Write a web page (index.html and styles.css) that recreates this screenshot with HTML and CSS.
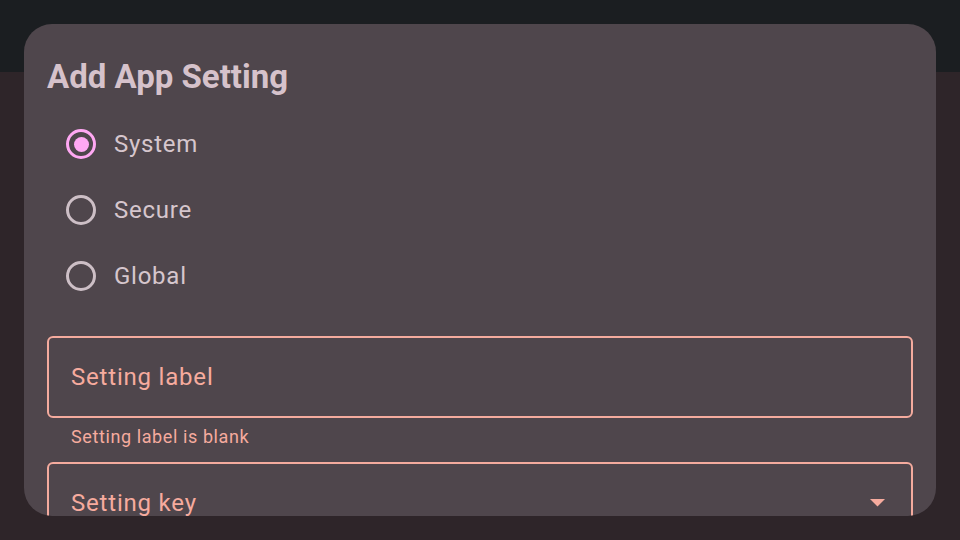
FILE: index.html
```html
<!DOCTYPE html>
<html>
<head>
<meta charset="utf-8">
<link rel="stylesheet" href="styles.css">
</head>
<body>
<div class="app">
  <header class="topbar"></header>
  <main class="content"></main>
</div>
<div class="dialog">
  <h1 class="title">Add App Setting</h1>
  <div class="radios">
    <label class="radio-row">
      <span class="radio checked"><span class="dot"></span></span>
      <span class="radio-text">System</span>
    </label>
    <label class="radio-row">
      <span class="radio"></span>
      <span class="radio-text">Secure</span>
    </label>
    <label class="radio-row">
      <span class="radio"></span>
      <span class="radio-text">Global</span>
    </label>
  </div>
  <div class="field">
    <span class="field-label">Setting label</span>
  </div>
  <div class="support">Setting label is blank</div>
  <div class="field dropdown">
    <span class="field-label">Setting key</span>
    <svg class="caret" width="15" height="8" viewBox="0 0 15 8"><path d="M0 0 L15 0 L7.5 7.5 Z" fill="#f6ab9e"/></svg>
  </div>
</div>
</body>
</html>
```

FILE: styles.css
```css
html, body {
  margin: 0;
  padding: 0;
  width: 960px;
  height: 540px;
  overflow: hidden;
  font-family: Roboto, "Liberation Sans", sans-serif;
}
.app {
  display: flex;
  flex-direction: column;
  height: 540px;
}
.topbar {
  height: 72px;
  background: #1b1e21;
  flex: none;
}
.content {
  flex: 1;
  background: #2e2529;
}
.dialog {
  position: absolute;
  left: 24px;
  top: 24px;
  width: 912px;
  height: 492px;
  box-sizing: border-box;
  padding: 0 23px;
  background: #4f464c;
  border-radius: 28px;
  overflow: hidden;
}
.title {
  margin: 0;
  padding-top: 32px;
  font-size: 33px;
  line-height: 42px;
  font-weight: 700;
  color: #d6c2cb;
  height: 42px;
  letter-spacing: 0;
}
.radios {
  display: flex;
  flex-direction: column;
  margin-top: 13px;
  padding-left: 19px;
}
.radio-row {
  display: flex;
  align-items: center;
  height: 66px;
  gap: 18px;
}
.radio {
  width: 30px;
  height: 30px;
  box-sizing: border-box;
  border: 3px solid #cdbfc6;
  border-radius: 50%;
  display: flex;
  align-items: center;
  justify-content: center;
}
.radio.checked {
  border-color: #ffa8f3;
}
.dot {
  width: 15px;
  height: 15px;
  border-radius: 50%;
  background: #ffa8f3;
}
.radio-text {
  font-size: 24px;
  color: #d6c6cd;
  letter-spacing: 0.75px;
}
.field {
  height: 82px;
  box-sizing: border-box;
  border: 2px solid #f4ab9e;
  border-radius: 6px;
  display: flex;
  align-items: center;
  padding: 0 22px;
}
.radios + .field {
  margin-top: 27px;
}
.field-label {
  font-size: 24px;
  color: #f6ab9e;
  letter-spacing: 0.8px;
  flex: 1;
}
.support {
  font-size: 18px;
  color: #f6ab9e;
  letter-spacing: 0.6px;
  padding: 8px 24px 0;
  height: 44px;
  box-sizing: border-box;
}
.caret {
  margin-right: 4px;
}
```
